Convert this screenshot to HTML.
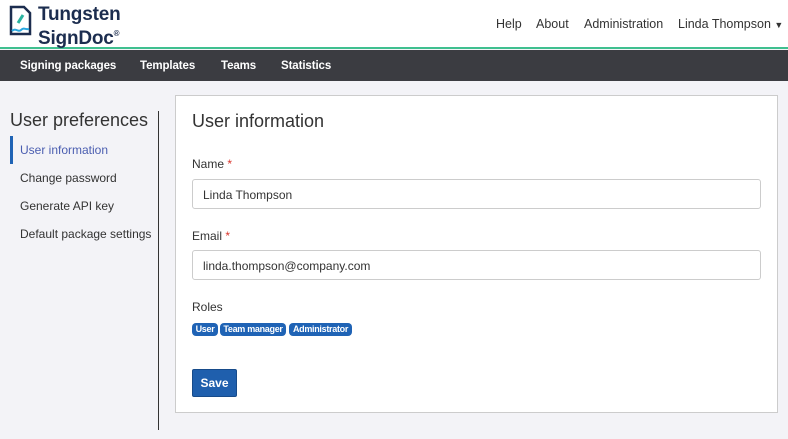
<!DOCTYPE html>
<html><head><meta charset="utf-8"><style>
*{box-sizing:border-box;margin:0;padding:0}
body{width:788px;height:439px;overflow:hidden;background:#f3f3f7;font-family:"Liberation Sans",sans-serif;color:#333;position:relative}
.hdr{position:absolute;left:0;top:0;width:788px;height:49px;background:#fff;border-bottom:2px solid #3fbf8f}
.logo{position:absolute;left:8px;top:5px}
.brand{position:absolute;left:38px;top:5px;font-family:"Liberation Sans",sans-serif;font-weight:bold;color:#1c2d4f;font-size:19px;line-height:19px;letter-spacing:-0.2px}
.brand sup{font-size:8px;vertical-align:8px}
.top{position:absolute;top:17px;font-size:12.5px;color:#333}
.nav{position:absolute;left:0;top:50px;width:788px;height:31px;background:#3b3c41}
.nav span{position:absolute;top:10px;color:#fff;font-size:11.5px;font-weight:bold;letter-spacing:-0.1px}
.side h2{position:absolute;left:10px;top:110px;font-size:18px;font-weight:normal;color:#333}
.si{position:absolute;left:20px;font-size:12px;color:#333}
.bar{position:absolute;left:10px;top:136px;width:3px;height:28px;background:#1f63b5}
.vl{position:absolute;left:158px;top:111px;width:1px;height:319px;background:#333}
.card{position:absolute;left:175px;top:95px;width:603px;height:318px;background:#fff;border:1px solid #ccc}
.card h1{position:absolute;left:16px;top:15px;font-size:18px;font-weight:normal;color:#333}
.lbl{position:absolute;left:16px;font-size:12px;color:#333}
.lbl b{color:#d9342b;font-weight:normal}
.inp{position:absolute;left:16px;width:569px;height:30px;border:1px solid #ccc;border-radius:3px;font-size:12px;padding:8px 10px;color:#333}
.bd{position:absolute;top:227px;height:13px;background:#1f63b5;color:#fff;font-size:9px;font-weight:bold;border-radius:4px;line-height:13px;text-align:center;letter-spacing:-0.3px;white-space:nowrap;overflow:hidden}
.btn{position:absolute;left:16px;top:273px;width:45px;height:28px;background:#1f5fad;border:1px solid #174b8a;border-radius:2px;color:#fff;font-size:12px;font-weight:bold;text-align:center;line-height:26px}
</style></head><body>
<div class="hdr">
<svg class="logo" width="26" height="32" viewBox="0 0 26 32"><path d="M3 2h13l6 6v21H3z" fill="none" stroke="#1c2d4f" stroke-width="2.5"/><path d="M15 10l-5 8" stroke="#2bb3a0" stroke-width="3"/><path d="M4 26c4-4 6 2 9-1s5 0 8-1" fill="none" stroke="#2aa8e0" stroke-width="2"/></svg>
<div class="brand">Tungsten<br>SignDoc<sup>®</sup></div>
<span class="top" style="left:496px">Help</span>
<span class="top" style="left:536px">About</span>
<span class="top" style="left:584px">Administration</span>
<span class="top" style="left:678px">Linda Thompson <span style="font-size:9px">▼</span></span>
</div>
<div class="nav"><span style="left:20px">Signing packages</span><span style="left:140px">Templates</span><span style="left:221px">Teams</span><span style="left:281px">Statistics</span></div>
<div class="side"><h2>User preferences</h2></div>
<div class="bar"></div>
<span class="si" style="top:143px;color:#4a5db0">User information</span>
<span class="si" style="top:171px">Change password</span>
<span class="si" style="top:199px">Generate API key</span>
<span class="si" style="top:227px">Default package settings</span>
<div class="vl"></div>
<div class="card">
<h1>User information</h1>
<span class="lbl" style="top:61px">Name <b>*</b></span>
<div class="inp" style="top:83px">Linda Thompson</div>
<span class="lbl" style="top:133px">Email <b>*</b></span>
<div class="inp" style="top:154px">linda.thompson@company.com</div>
<span class="lbl" style="top:204px">Roles</span>
<span class="bd" style="left:16px;width:26px">User</span>
<span class="bd" style="left:44px;width:66px">Team manager</span>
<span class="bd" style="left:113px;width:63px">Administrator</span>
<div class="btn">Save</div>
</div>
</body></html>
